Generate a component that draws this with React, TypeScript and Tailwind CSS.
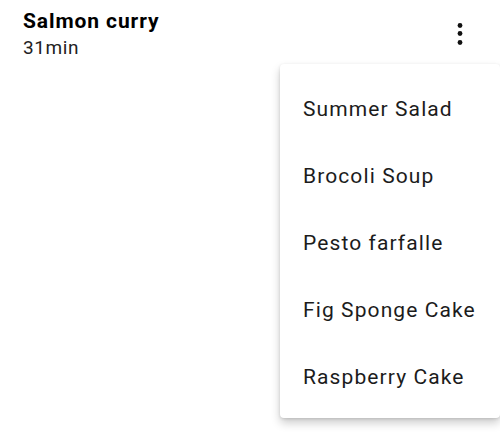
import React from 'react';

const recipes = ['Summer Salad', 'Brocoli Soup', 'Pesto farfalle', 'Fig Sponge Cake', 'Raspberry Cake'];

export default function App() {
  return (
    <div className="relative w-[500px] h-[444px] bg-white overflow-hidden font-['Roboto',sans-serif] text-[#1a1a1a]">
      <div className="flex items-start justify-between pl-[23px] pr-[28px] pt-[8px]">
        <div className="flex flex-col">
          <span className="text-[21px] font-bold leading-[26px] tracking-[0.9px] text-black">Salmon curry</span>
          <span className="text-[19px] leading-[24px] mt-[2px] tracking-[0.6px] text-[#222]">31min</span>
        </div>
        <button className="mt-[13px] w-[24px] h-[24px] flex items-center justify-center">
          <svg width="24" height="24" viewBox="0 0 24 24" fill="#111">
            <circle cx="12" cy="4.5" r="2.4" />
            <circle cx="12" cy="12.5" r="2.4" />
            <circle cx="12" cy="21.5" r="2.4" />
          </svg>
        </button>
      </div>

      {/* dropdown menu */}
      <div className="absolute left-[280px] top-[64px] w-[220px] pt-[12px] pb-[7px] bg-white rounded-[4px] shadow-[0_5px_10px_rgba(0,0,0,0.2),0_1px_3px_rgba(0,0,0,0.12)]">
        {recipes.map(r => (
          <div key={r} className="h-[67px] flex items-center pl-[23px] text-[21px] tracking-[1.1px] text-[#1c1c1c]">
            {r}
          </div>
        ))}
      </div>
    </div>
  );
}
